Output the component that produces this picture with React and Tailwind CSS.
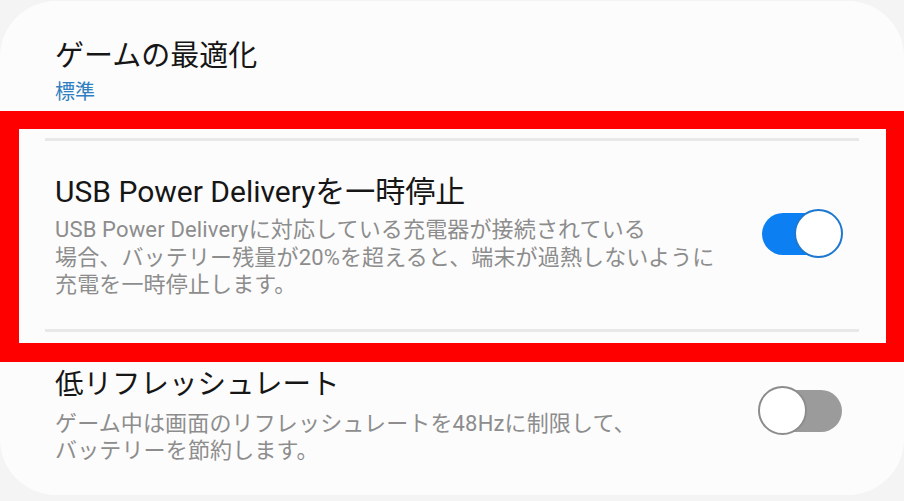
function Toggle({ on }) {
  return (
    <div className="relative h-[50px] w-[85px] shrink-0">
      <div
        className={
          on
            ? "absolute left-[4px] top-[4px] h-[42px] w-[80px] rounded-full bg-[#0c7ff2]"
            : "absolute left-[4px] top-[4px] h-[42px] w-[80px] rounded-full bg-[#9b9b9b]"
        }
      />
      <div
        className={
          on
            ? "absolute left-[36px] top-0 h-[49px] w-[49px] rounded-full border-2 border-[#1d78cf] bg-white"
            : "absolute left-0 top-0 h-[49px] w-[49px] rounded-full border-2 border-[#8c8c8c] bg-white"
        }
      />
    </div>
  );
}

function Divider() {
  return <div className="mx-[45px] h-[3px] bg-[#e8e8e8]" />;
}

export default function App() {
  return (
    <div className="h-[501px] w-[904px] bg-[#f4f4f4] pt-px font-[Roboto,'Noto_Sans_CJK_JP',sans-serif]">
      <div className="relative h-[494px] rounded-[56px] bg-[#fcfcfc]">
        <div className="px-[55px] pt-[37px] pb-[33px]">
          <div className="text-[29px] leading-[36px] text-[#161616]">ゲームの最適化</div>
          <div className="mt-[5px] text-[20px] leading-[26px] text-[#2f7fc2]">標準</div>
        </div>
        <Divider />
        <div className="flex items-start justify-between pl-[55px] pr-[61px] pt-[33px] pb-[30px]">
          <div>
            <div className="whitespace-nowrap text-[30px] leading-[36px] text-[#161616]">
              USB Power Deliveryを一時停止
            </div>
            <div className="mt-[6px] whitespace-nowrap text-[22px] leading-[27.5px] tracking-[0.15px] text-[#8d8d8d]">
              USB Power Deliveryに対応している充電器が接続されている
              <br />
              場合、バッテリー残量が20%を超えると、端末が過熱しないように
              <br />
              充電を一時停止します。
            </div>
          </div>
          <div className="mt-[35px]">
            <Toggle on />
          </div>
        </div>
        <Divider />
        <div className="flex items-start justify-between pl-[55px] pr-[61px] pt-[35px]">
          <div>
            <div className="whitespace-nowrap text-[28.5px] leading-[36px] text-[#161616]">
              低リフレッシュレート
            </div>
            <div className="mt-[7px] whitespace-nowrap text-[22px] leading-[27px] tracking-[0.15px] text-[#8d8d8d]">
              ゲーム中は画面のリフレッシュレートを48Hzに制限して、
              <br />
              バッテリーを節約します。
            </div>
          </div>
          <div className="mt-[19px]">
            <Toggle />
          </div>
        </div>

        {/* red highlight frame drawn over the middle row */}
        <div className="pointer-events-none absolute left-0 right-0 top-[110px] h-[251px] border-[18px] border-l-[19px] border-b-[19px] border-[#ff0000]" />
      </div>
    </div>
  );
}
